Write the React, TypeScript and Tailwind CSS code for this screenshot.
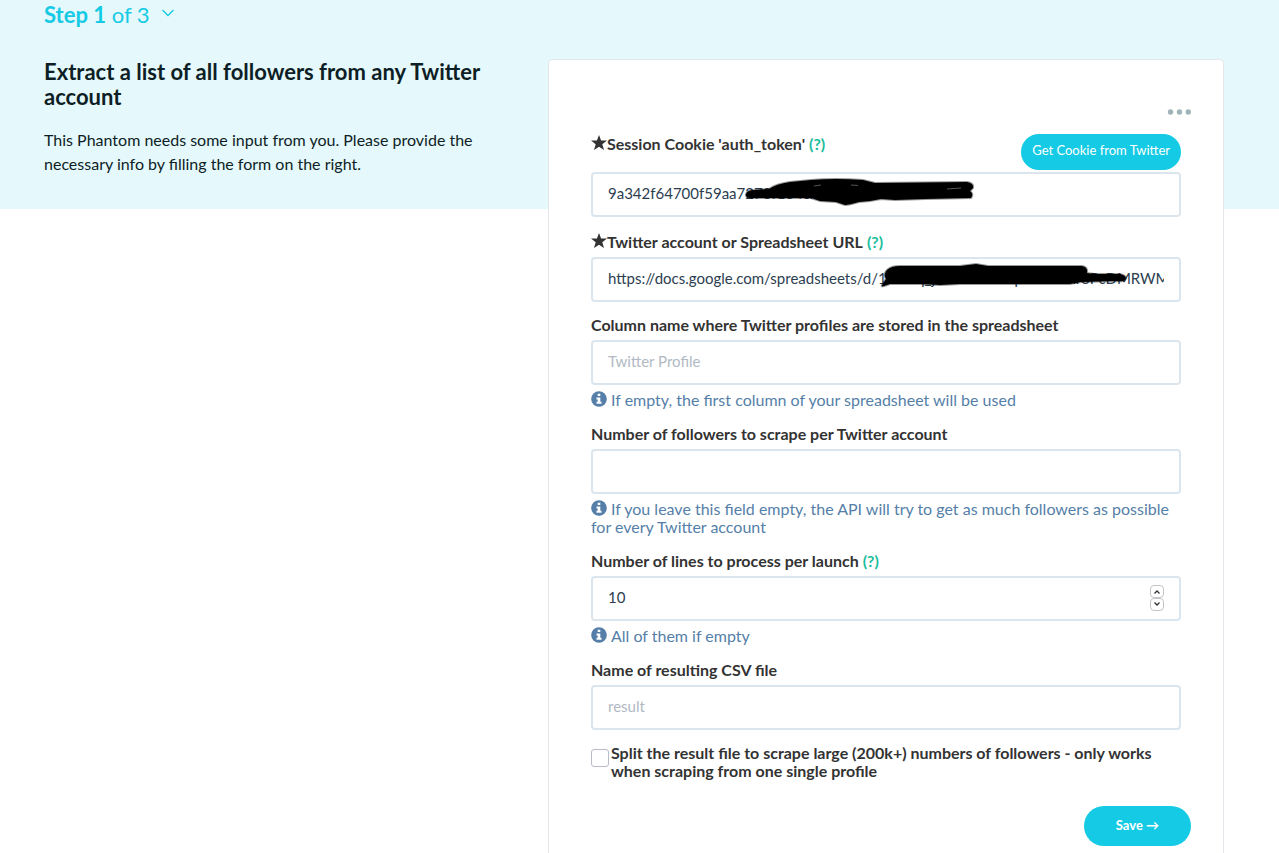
import { useState } from "react";
import type { ReactNode } from "react";

const inputClass =
  "block h-[45px] w-full rounded border-2 border-[#dae5ed] bg-white px-[15px] pb-1 text-[15px] text-[#2c3e50] placeholder:text-[#b1b9c4] focus:border-[#15cae4] focus:outline-none";

function Star() {
  return (
    <svg viewBox="0 0 16 16" className="h-4 w-4 shrink-0 fill-[#333]" aria-hidden="true">
      <path d="M8 1L10.100 6.500H16L11.300 10.200L13 16L8 12.700L3 16L4.700 10.200L0 6.500H5.900Z" />
    </svg>
  );
}

function Help() {
  return (
    <a href="#help" className="font-bold text-[#1abc9c]">
      (?)
    </a>
  );
}

function Info({ children }: { children: ReactNode }) {
  return (
    <p className="mt-1.5 pb-0.5 text-base leading-[18px] text-[#557fa8]">
      <svg viewBox="0 0 16 16" className="mr-1 inline-block h-4 w-4 align-top" aria-hidden="true">
        <circle cx="8" cy="8" r="7.8" fill="#557fa8" />
        <path d="M6.7 2.8h2.6v2.3H6.7zM5.5 6.5h3.8v4.3h1.2v1.9h-5v-1.9h1.2V8.4H5.5z" fill="#fff" />
      </svg>
      {children}
    </p>
  );
}

interface FieldProps {
  id: string;
  label: string;
  required?: boolean;
  help?: boolean;
  info?: string;
  children: ReactNode;
}

function Field({ id, label, required, help, info, children }: FieldProps) {
  return (
    <div className="mb-[15px]">
      <div
        className={
          required ? "mb-[5px] flex h-5 items-start leading-4" : "mb-[5px] flex h-[18px] items-start leading-4"
        }
      >
        {required && <Star />}
        <label htmlFor={id} className={required ? "pt-0.5 font-bold" : "font-bold"}>
          {label}
        </label>
        {help && (
          <span className={required ? "pt-0.5 pl-1" : "pl-1"}>
            <Help />
          </span>
        )}
      </div>
      {children}
      {info && <Info>{info}</Info>}
    </div>
  );
}

export default function App() {
  const [cookie, setCookie] = useState("9a342f64700f59aa7273f134cxx");
  const [url, setUrl] = useState(
    "https://docs.google.com/spreadsheets/d/1xxxxq_jxxxxxxxxxxqrxxxxxxxr8PcDMRWMxxxx"
  );
  const [lines, setLines] = useState(10);

  return (
    <div className="min-h-screen overflow-hidden bg-[linear-gradient(#e5f8fc_209px,#fff_209px)] pr-[55px] pl-11 font-['Lato',sans-serif] text-[#0e1e25]">
      <header className="flex h-[59px] items-start">
        <button type="button" className="flex items-center text-[22px] leading-[30px] text-[#15cae4]">
          <span>
            <b>Step 1</b> of 3
          </span>
          <svg viewBox="0 0 12 8" className="mb-1 ml-3 h-2 w-3" fill="none" stroke="currentColor" strokeWidth="1.3">
            <path d="M0.5 1L6 6.5 11.5 1" />
          </svg>
        </button>
      </header>

      <main className="grid grid-cols-[126fr_169fr]">
        <section className="pr-10">
          <h1 className="text-[22px] leading-[25px] font-bold">
            Extract a list of all followers from any Twitter account
          </h1>
          <p className="mt-[19px] text-base leading-6">
            This Phantom needs some input from you. Please provide the necessary info by filling the form on the
            right.
          </p>
        </section>

        <form
          onSubmit={(e) => e.preventDefault()}
          className="rounded border border-[#e3e6ea] bg-white pt-12 pr-8 pb-8 pl-[42px] text-base leading-[18px] text-[#333]"
        >
          <div className="flex justify-end">
            <button type="button" aria-label="More options" className="h-2 w-6">
              <svg viewBox="0 0 24 8" className="block h-2 w-6 fill-[#9fb5b9]" aria-hidden="true">
                <circle cx="3.5" cy="4" r="2.7" />
                <circle cx="12.5" cy="4" r="2.7" />
                <circle cx="21.3" cy="4" r="2.7" />
              </svg>
            </button>
          </div>

          <div className="mt-[18px] pr-2.5">
            <div className="mb-[15px]">
              <div className="mb-0.5 flex items-start justify-between">
                <div className="flex items-start leading-4">
                  <Star />
                  <label htmlFor="cookie" className="pt-0.5 pr-1 font-bold">
                    Session Cookie 'auth_token'
                  </label>
                  <span className="pt-0.5">
                    <Help />
                  </span>
                </div>
                <button
                  type="button"
                  className="h-9 rounded-full bg-[#15cae4] px-[11px] pb-1 text-[13px] text-white"
                >
                  Get Cookie from Twitter
                </button>
              </div>
              <div className="relative">
                <input
                  id="cookie"
                  type="text"
                  value={cookie}
                  onChange={(e) => setCookie(e.target.value)}
                  className={inputClass}
                />
                <svg
                  viewBox="0 0 230 30"
                  className="pointer-events-none absolute top-1 left-[154px] h-[30px] w-[230px] overflow-visible"
                  aria-hidden="true"
                >
                  <path
                    d="M1 18Q2 14 10 14L24 13Q31 8 45 6L66 4Q90 2 118 4L130 7 222 6Q229 7 228 12L225 15Q229 18 226 22L180 23 150 24 136 23 125 25 114 26Q104 29 100 29L91 26 75 25 66 22 40 22 22 22 5 22Q0 21 1 18Z"
                    fill="#000"
                    stroke="#000"
                    strokeOpacity="0.4"
                    strokeWidth="2"
                  />
                  <path d="M202 13l14-1M106 9l7 0.500M69 10l7-1" stroke="#555" strokeWidth="1" />
                </svg>
              </div>
            </div>

            <Field id="url" label="Twitter account or Spreadsheet URL" required help>
              <div className="relative">
                <input
                  id="url"
                  type="text"
                  value={url}
                  onChange={(e) => setUrl(e.target.value)}
                  className={inputClass}
                />
                <svg
                  viewBox="0 0 248 26"
                  className="pointer-events-none absolute top-1.5 left-[289px] h-[26px] w-[248px] overflow-visible"
                  aria-hidden="true"
                >
                  <path
                    d="M2 22L6 16Q3 11 7 7Q11 3 20 3L80 3 96 1 108 3 202 3Q208 4 207 10L214 11 240 11Q248 13 245 17Q243 19 236 18L201 19 190 21 158 21 80 21 60 22 40 21 10 21 4 23Q1 24 2 22Z"
                    fill="#000"
                    stroke="#000"
                    strokeOpacity="0.4"
                    strokeWidth="2"
                  />
                </svg>
              </div>
            </Field>

            <Field
              id="column"
              label="Column name where Twitter profiles are stored in the spreadsheet"
              info="If empty, the first column of your spreadsheet will be used"
            >
              <input id="column" type="text" placeholder="Twitter Profile" className={inputClass} />
            </Field>

            <Field
              id="followers"
              label="Number of followers to scrape per Twitter account"
              info="If you leave this field empty, the API will try to get as much followers as possible for every Twitter account"
            >
              <input id="followers" type="text" className={inputClass} />
            </Field>

            <Field id="lines" label="Number of lines to process per launch" help info="All of them if empty">
              <div className="relative">
                <input
                  id="lines"
                  type="text"
                  inputMode="numeric"
                  value={lines}
                  onChange={(e) => setLines(Number(e.target.value) || 0)}
                  className={inputClass}
                />
                <div className="absolute top-[9px] right-[17px] flex w-3.5 flex-col text-[#333]">
                  <button
                    type="button"
                    aria-label="Increase"
                    onClick={() => setLines(lines + 1)}
                    className="flex h-[13px] items-center justify-center rounded border border-[#c4c4c8]"
                  >
                    <svg viewBox="0 0 6 4" className="h-1 w-1.5" fill="none" stroke="currentColor" strokeWidth="1.3">
                      <path d="M0.500 3.500L3 1l2.500 2.500" />
                    </svg>
                  </button>
                  <button
                    type="button"
                    aria-label="Decrease"
                    onClick={() => setLines(lines - 1)}
                    className="flex h-[13px] items-center justify-center rounded border border-[#c4c4c8] pb-0.5"
                  >
                    <svg viewBox="0 0 6 4" className="h-1 w-1.5" fill="none" stroke="currentColor" strokeWidth="1.3">
                      <path d="M0.500 0.500L3 3l2.500-2.500" />
                    </svg>
                  </button>
                </div>
              </div>
            </Field>

            <Field id="csv" label="Name of resulting CSV file">
              <input id="csv" type="text" placeholder="result" className={inputClass} />
            </Field>

            <div className="-mt-px flex items-start gap-0.5">
              <input
                id="split"
                type="checkbox"
                className="mt-[5px] h-[18px] w-[18px] shrink-0 appearance-none rounded-[3px] border border-[#b8bcc6] bg-white checked:bg-[#15cae4]"
              />
              <label htmlFor="split" className="font-bold">
                Split the result file to scrape large (200k+) numbers of followers - only works when scraping from one
                single profile
              </label>
            </div>
          </div>

          <div className="mt-[26px] flex justify-end">
            <button
              type="submit"
              className="h-10 rounded-full bg-[#15cae4] px-8 pb-0.5 text-[13px] font-bold text-white"
            >
              Save →
            </button>
          </div>
        </form>
      </main>
    </div>
  );
}
